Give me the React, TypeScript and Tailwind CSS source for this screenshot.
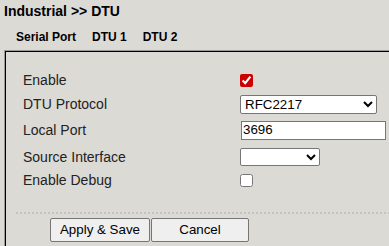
import React from "react";

function Row({ label, h, children }: { label: string; h: string; children: React.ReactNode }) {
  return (
    <div className={`flex items-center ${h}`}>
      <div className="w-[217px] text-[14px] leading-4 text-[#222]">{label}</div>
      <div className="flex items-center">{children}</div>
    </div>
  );
}

export default function App() {
  return (
    <div className="w-[389px] h-[246px] overflow-hidden bg-[#dcdad5] font-['Liberation_Sans',Arial,sans-serif] text-black">
      <div className="pl-1 pt-[3px] text-[14px] leading-4 font-bold">Industrial &gt;&gt; DTU</div>

      <div className="mt-[11px] flex gap-4 pl-4 text-[12px] leading-[14px] font-bold">
        <span>Serial Port</span>
        <span>DTU 1</span>
        <span>DTU 2</span>
      </div>

      <div className="mt-[6px] ml-1 w-[420px] border border-[#9a9a9a]">
        <div className="border border-black h-[220px]">
          <div className="pt-[16px] pl-[17px]">
            <Row label="Enable" h="h-6">
              <input type="checkbox" defaultChecked className="w-[13px] h-[13px] accent-[#cc0000]" />
            </Row>
            <Row label="DTU Protocol" h="h-6">
              <select className="w-[137px] h-[19px] bg-white border border-[#767676] rounded-[2px] text-[13.33px] text-black">
                <option>RFC2217</option>
              </select>
            </Row>
            <Row label="Local Port" h="h-7">
              <input
                type="text"
                defaultValue="3696"
                className="ml-px w-[145px] h-[19px] bg-white border border-[#767676] px-px text-[13.33px] text-black"
              />
            </Row>
            <Row label="Source Interface" h="h-[25px]">
              <select className="w-[80px] h-[18px] bg-white border border-[#767676] rounded-[2px] text-[13.33px]">
                <option></option>
              </select>
            </Row>
            <Row label="Enable Debug" h="h-[22px]">
              <input type="checkbox" className="w-[13px] h-[13px] accent-[#cc0000]" />
            </Row>
          </div>

          <div className="mt-[21px] ml-[10px] border-t-2 border-dotted border-[#c4c4c4]" />

          <div className="mt-1 ml-[44px] flex gap-px">
            <button className="w-[100px] h-6 bg-[#efefef] border border-[#767676] rounded-[2px] text-[13.33px] text-black">
              Apply &amp; Save
            </button>
            <button className="w-[98px] h-6 bg-[#efefef] border border-[#767676] rounded-[2px] text-[13.33px] text-black">
              Cancel
            </button>
          </div>
        </div>
      </div>
    </div>
  );
}
